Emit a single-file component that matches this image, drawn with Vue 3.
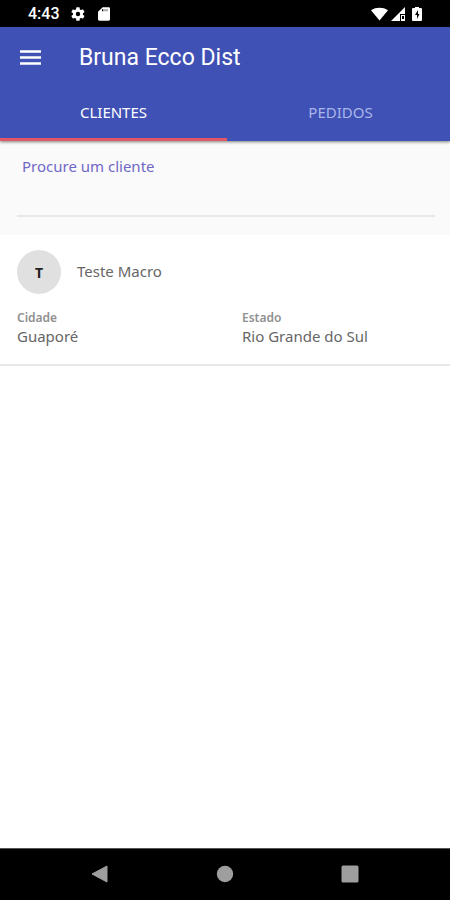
<template>
  <div class="screen">
    <div class="status-bar">
      <div class="status-bar__group">
        <span class="status-bar__time">4:43</span>
        <svg class="status-bar__icon" viewBox="0 0 24 24" fill="currentColor">
          <path fill-rule="evenodd" d="M19.4 13a7.5 7.5 0 000-2l2.1-1.6a.5.5 0 00.1-.7l-2-3.4a.5.5 0 00-.6-.2l-2.5 1a7.3 7.3 0 00-1.7-1l-.4-2.6a.5.5 0 00-.5-.5h-4a.5.5 0 00-.5.5L9 5.1a7.3 7.3 0 00-1.7 1l-2.5-1a.5.5 0 00-.6.2l-2 3.4a.5.5 0 00.1.7L4.5 11a7.5 7.5 0 000 2l-2.2 1.6a.5.5 0 00-.1.7l2 3.4c.1.2.4.3.6.2l2.5-1a7.3 7.3 0 001.7 1l.4 2.6c0 .3.2.5.5.5h4c.3 0 .5-.2.5-.5l.4-2.6a7.3 7.3 0 001.7-1l2.5 1c.2.1.5 0 .6-.2l2-3.4a.5.5 0 00-.1-.7zM12 15.3a3.3 3.3 0 110-6.6 3.3 3.3 0 010 6.6z"/>
        </svg>
        <svg class="status-bar__icon" viewBox="0 0 24 24" fill="currentColor">
          <path fill-rule="evenodd" d="M19 2h-9L3 8.5V20a2 2 0 002 2h14a2 2 0 002-2V4a2 2 0 00-2-2zM9 5h2v3H9zM13 5h1v3h-1zM16 5h1v3h-1z"/>
        </svg>
      </div>
      <div class="status-bar__group status-bar__group--right">
        <svg class="status-bar__wifi" viewBox="0 0 18 14" fill="currentColor">
          <path d="M9 14L0 3C5 -.5 13 -.5 18 3z"/>
        </svg>
        <svg class="status-bar__signal" viewBox="0 0 14 14" fill="currentColor">
          <path d="M0 14L14 0v7H9v7z"/>
          <path fill-rule="evenodd" d="M10 8h4v6h-4zM11 9v3h2V9z"/>
        </svg>
        <svg class="status-bar__battery" viewBox="0 0 10 14" fill="currentColor">
          <path fill-rule="evenodd" d="M3 0h4v1h2a1 1 0 011 1v11a1 1 0 01-1 1H1a1 1 0 01-1-1V2a1 1 0 011-1h2zM6 3L3 8h2v4l2.500-5H6z"/>
        </svg>
      </div>
    </div>

    <header class="header">
      <div class="header__toolbar">
        <button class="header__menu" type="button" aria-label="Menu">
          <svg viewBox="0 0 20 14" fill="currentColor">
            <path d="M0 0h20v2.4H0zM0 5.8h20v2.4H0zM0 11.6h20V14H0z"/>
          </svg>
        </button>
        <h1 class="header__title">Bruna Ecco Dist</h1>
      </div>
      <nav class="tabs">
        <button v-for="tab in tabs"
                :key="tab"
                type="button"
                class="tabs__item"
                :class="{ 'tabs__item--active': tab === activeTab }"
                @click="activeTab = tab">
          {{ tab }}
        </button>
      </nav>
    </header>

    <main class="content">
      <div class="search">
        <div class="search__field">
          <label class="search__label" for="search">Procure um cliente</label>
          <input id="search" v-model="search" class="search__input" type="text">
        </div>
      </div>

      <article class="client" v-for="client in filteredClients" :key="client.name">
        <div class="client__heading">
          <span class="client__avatar">{{ client.name.charAt(0) }}</span>
          <h2 class="client__name">{{ client.name }}</h2>
        </div>
        <dl class="client__info">
          <div>
            <dt>Cidade</dt>
            <dd>{{ client.city }}</dd>
          </div>
          <div>
            <dt>Estado</dt>
            <dd>{{ client.state }}</dd>
          </div>
        </dl>
      </article>
    </main>

    <footer class="nav-bar">
      <button type="button" aria-label="Voltar">
        <svg viewBox="0 0 18 18" fill="currentColor"><path d="M16 1v16L1 9z" stroke="currentColor" stroke-linejoin="round"/></svg>
      </button>
      <button type="button" aria-label="Início">
        <svg viewBox="0 0 18 18" fill="currentColor"><circle cx="9" cy="9" r="8.2"/></svg>
      </button>
      <button type="button" aria-label="Recentes">
        <svg viewBox="0 0 18 18" fill="currentColor"><rect x=".5" y=".5" width="17" height="17" rx="1.5"/></svg>
      </button>
    </footer>
  </div>
</template>

<script setup>
import {computed, ref} from 'vue';

const tabs = ['CLIENTES', 'PEDIDOS'];
const activeTab = ref('CLIENTES');
const search = ref('');

const clients = [
  {name: 'Teste Macro', city: 'Guaporé', state: 'Rio Grande do Sul'},
];

const filteredClients = computed(() => {
  return clients.filter((client) =>
      client.name.toLowerCase().includes(search.value.toLowerCase()))
});
</script>

<style>
body {
  margin: 0;
  background: #fff;
}
</style>

<style scoped>
.screen {
  display: flex;
  flex-direction: column;
  min-height: 100vh;
  font-family: "Noto Sans", "Open Sans", sans-serif;
  color: #666;
}

button {
  margin: 0;
  padding: 0;
  border: 0;
  background: none;
  color: inherit;
  font: inherit;
  cursor: pointer;
}

svg {
  display: block;
}

.status-bar {
  display: flex;
  justify-content: space-between;
  align-items: center;
  height: 27px;
  padding: 0 28px;
  background: #000;
  color: #fff;
}

.status-bar__group {
  display: flex;
  align-items: center;
  gap: 10px;
}

.status-bar__group--right {
  gap: 3px;
}

.status-bar__time {
  font: 500 16px/20px Roboto, sans-serif;
}

.status-bar__icon {
  width: 16px;
  height: 16px;
}

.status-bar__wifi {
  width: 17px;
  height: 14px;
}

.status-bar__signal {
  width: 14px;
  height: 14px;
}

.status-bar__battery {
  width: 10px;
  height: 14px;
  margin-left: 4px;
}

.header {
  position: relative;
  overflow: hidden;
  background: #3f51b5;
  color: #fff;
  box-shadow: 0 1px 3px rgba(0, 0, 0, .5);
}

.header__toolbar {
  display: flex;
  align-items: center;
  height: 60px;
  padding: 0 20px;
  gap: 38px;
}

.header__menu svg {
  width: 21px;
  height: 15px;
}

.header__title {
  margin: 0;
  padding-top: 2px;
  font: 400 23px/28px Roboto, sans-serif;
}

.tabs {
  display: flex;
  margin-right: -4px;
}

.tabs__item {
  flex: 1;
  height: 54px;
  padding-bottom: 2px;
  border-bottom: 3px solid transparent;
  font-size: 15px;
  line-height: 20px;
  color: #a9b6ea;
}

.tabs__item--active {
  border-bottom-color: #e05766;
  color: #fff;
}

.content {
  flex: 1;
}

.search {
  padding: 15px 15px 18px 17px;
  background: #fafafa;
}

.search__field {
  display: flex;
  flex-direction: column;
  border-bottom: 2px solid #e8e8e8;
}

.search__label {
  padding-left: 5px;
  font-size: 15px;
  line-height: 20px;
  color: #7068c6;
}

.search__input {
  height: 39px;
  padding: 0 5px;
  border: 0;
  outline: 0;
  background: none;
  color: inherit;
  font: inherit;
}

.client {
  padding: 15px 0 18px 17px;
  border-bottom: 2px solid #e8e8e8;
  background: #fff;
}

.client__heading {
  display: flex;
  align-items: center;
  gap: 16px;
}

.client__avatar {
  display: flex;
  align-items: center;
  justify-content: center;
  width: 44px;
  height: 44px;
  border-radius: 50%;
  background: #e0e0e0;
  color: #222;
  font-size: 14px;
  font-weight: 700;
}

.client__name {
  margin: 0;
  padding-bottom: 2px;
  font-size: 15px;
  font-weight: 400;
  line-height: 20px;
}

.client__info {
  display: grid;
  grid-template-columns: 1fr 1fr;
  gap: 17px;
  margin: 16px 0 0;
}

.client__info dt {
  font-size: 12px;
  font-weight: 600;
  line-height: 16px;
  color: #909090;
}

.client__info dd {
  margin: 0;
  font-size: 15px;
  line-height: 20px;
}

.nav-bar {
  display: flex;
  justify-content: space-around;
  align-items: center;
  height: 49px;
  padding: 0 37px 2px;
  border-top: 1px solid #555;
  background: #000;
  color: #9e9e9e;
}

.nav-bar svg {
  width: 18px;
  height: 18px;
}
</style>
